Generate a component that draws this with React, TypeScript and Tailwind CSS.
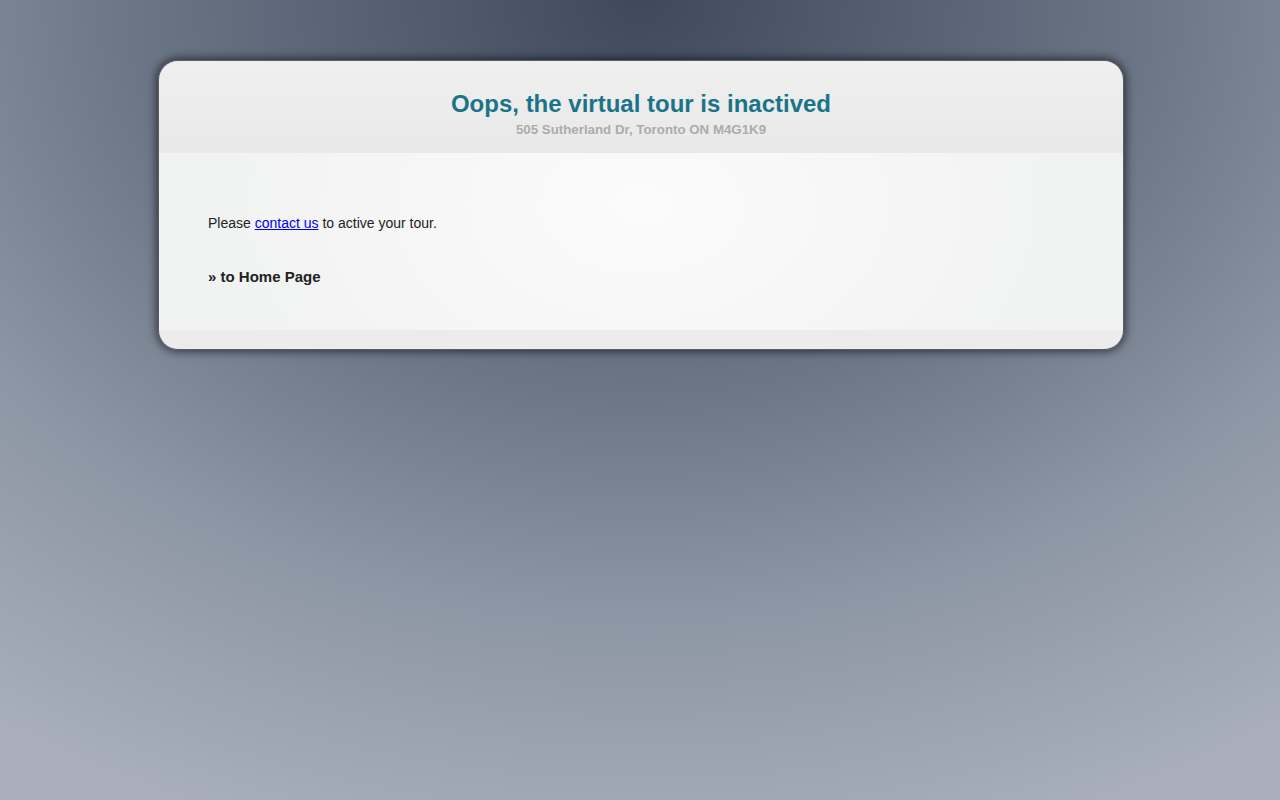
export default function App() {
  return (
    <div
      className="min-h-[800px] w-full pl-[2px] pt-[60px] bg-[radial-gradient(ellipse_90%_110%_at_50%_0%,#3e4a5c_0%,#6b7687_45%,#8d96a4_70%,#a9afbc_100%)]"
      style={{ fontFamily: '"Liberation Sans", Arial, sans-serif' }}
    >
      <div className="mx-auto w-[966px] overflow-hidden rounded-[20px] border border-[#5a5f66] shadow-[0_0_8px_2px_rgba(0,0,0,0.55)]">
        <div className="flex h-[92px] flex-col items-center bg-gradient-to-b from-[#efefef] to-[#e9e9e9] pt-[29px]">
          <h1 className="text-[24px] font-bold leading-[28px] text-[#1a7489]">
            Oops, the virtual tour is inactived
          </h1>
          <p className="mt-[4px] text-[13.3px] font-bold leading-[16px] text-[#acacac]">
            505 Sutherland Dr, Toronto ON M4G1K9
          </p>
        </div>
        <div className="h-[177px] bg-[radial-gradient(ellipse_45%_160%_at_50%_30%,#fbfbfb_0%,#f6f6f6_55%,#f1f2f2_100%)] px-[49px] pt-[62px]">
          <p className="text-[14px] leading-[17px] text-[#222]">
            Please{" "}
            <a href="#" className="text-[#0000ee] underline">
              contact us
            </a>{" "}
            to active your tour.
          </p>
          <p className="mt-[36px] text-[15px] font-bold leading-[18px] text-[#222]">
            » to Home Page
          </p>
        </div>
        <div className="h-[19px] bg-[#ececec]" />
      </div>
    </div>
  );
}
